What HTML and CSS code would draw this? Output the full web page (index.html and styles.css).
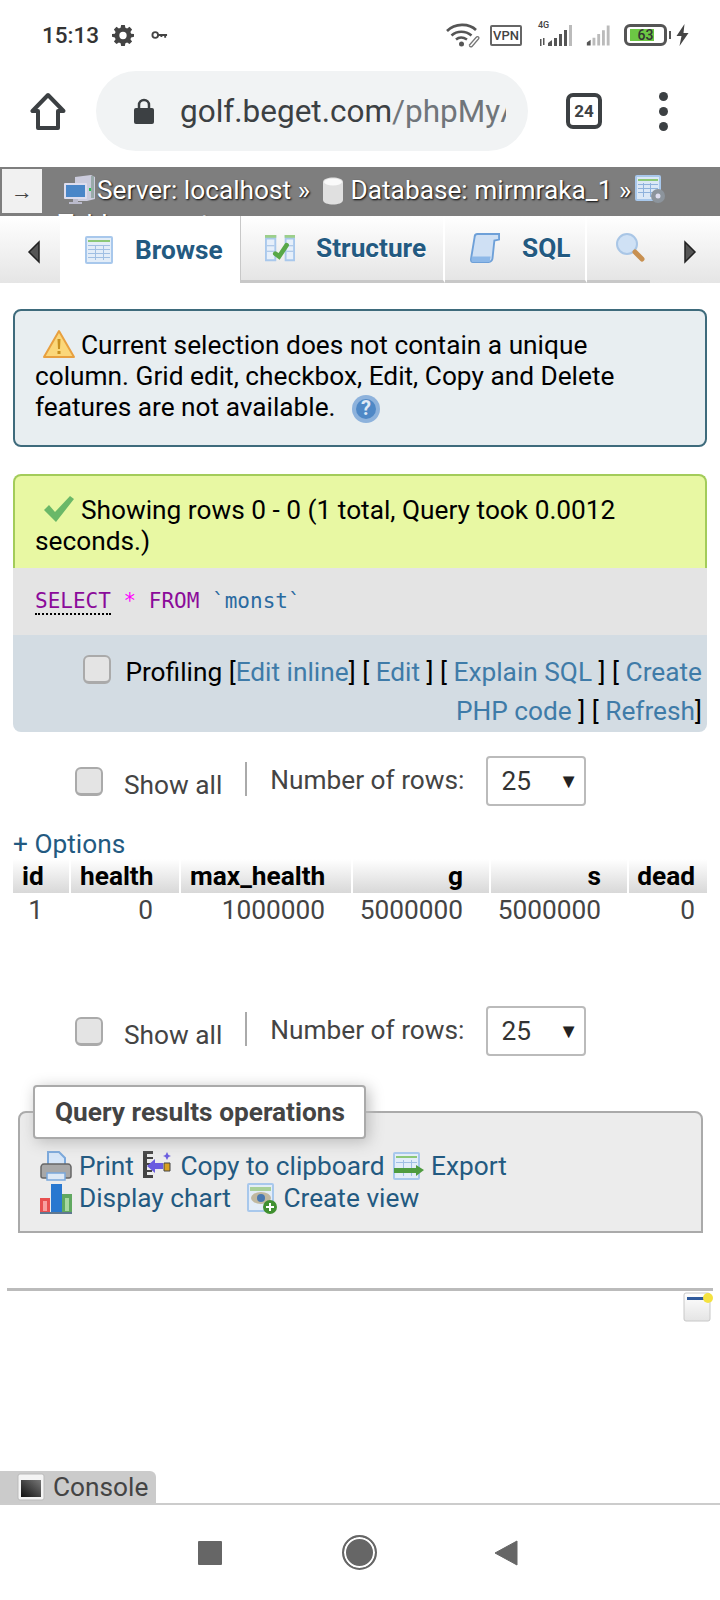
FILE: index.html
```html
<!DOCTYPE html>
<html lang="en">
<head>
<meta charset="utf-8">
<title>phpMyAdmin</title>
<link rel="stylesheet" href="styles.css">
</head>
<body>
<div class="phone">
  <header class="status">
    <span class="time">15:13</span>
    <svg class="ic-gear" viewBox="0 0 24 24"><path fill="#444" fill-rule="evenodd" d="M10 1h4l.6 3.1 1.9.8L19.100 3.100 21.900 6l-1.800 2.600.8 1.900L24 11v3l-3.100.6-.8 1.900 1.800 2.600-2.800 2.800-2.600-1.800-1.900.8L14 24h-4l-.6-3.100-1.900-.8-2.600 1.800L2.100 19.100l1.800-2.600-.8-1.900L0 14v-3l3.100-.5.8-1.900L2.100 6l2.800-2.900 2.600 1.800 1.900-.8zM12 8.500a4 4 0 1 0 0 8 4 4 0 0 0 0-8z"/></svg>
    <svg class="ic-key" viewBox="0 0 18 10"><circle cx="4.500" cy="5" r="3" fill="none" stroke="#444" stroke-width="2"/><path fill="#444" d="M7.500 4H17v2h-1v2h-2V6h-2v1h-2V6H7.500z"/></svg>
    <span class="grow"></span>
    <svg class="ic-wifi" viewBox="0 0 34 24"><g fill="none" stroke="#555" stroke-width="2.600"><path d="M1 7.500C9-.5 23-.5 30 6.500"/><path d="M5.500 12c5.500-5 14-5 20 0"/><path d="M10 16c3-2.500 7-2.500 11 0"/></g><circle cx="15.500" cy="20.500" r="2.500" fill="#555"/><path d="M23 22l7-8c2-2 4 0 2 2l-6 7c-1 1-3 0-2-1" fill="none" stroke="#777" stroke-width="1.300"/></svg>
    <span class="vpn">VPN</span>
    <span class="net"><span class="net-label">4G</span>
      <svg class="ic-sig" viewBox="0 0 38 24"><path fill="#555" d="M2 16h1.500v7H2zM5 15h1.500v7H5zM10 20l4-3v6h-4zM16 15h3v8h-3zM21 11h3v12h-3zM26 7h3v16h-3z"/><path fill="#bbb" d="M31 2h3v21h-3z"/></svg>
    </span>
    <svg class="ic-sig2" viewBox="0 0 38 24"><path fill="#555" d="M3 20l4-3v6H3z"/><path fill="#bbb" d="M9 15h3v8H9zM14 11h3v12h-3zM19 7h3v16h-3zM24 2h3v21h-3z"/></svg>
    <span class="battery"><span class="battery-fill"></span><span class="battery-num">63</span></span>
    <span class="battery-tip"></span>
    <svg class="ic-bolt" viewBox="0 0 12 22"><path fill="#444" d="M8 0L0 12h5l-2 10 9-13H7z"/></svg>
  </header>

  <nav class="browser">
    <svg class="ic-home" viewBox="0 0 36 38"><path fill="none" stroke="#3c4043" stroke-width="4" stroke-linejoin="round" d="M18 3L2.500 19H8v17h20V19h5.500z"/></svg>
    <div class="url">
      <svg class="ic-lock" viewBox="0 0 20 26"><path fill="#3c4043" d="M2 10h16a2 2 0 0 1 2 2v12a2 2 0 0 1-2 2H2a2 2 0 0 1-2-2V12a2 2 0 0 1 2-2z"/><path fill="none" stroke="#3c4043" stroke-width="2.500" d="M5 11V7a5 5 0 0 1 10 0v4"/></svg>
      <span class="url-text"><span class="url-host">golf.beget.com</span>/phpMyAdmin</span>
    </div>
    <span class="tabcount">24</span>
    <span class="menu"><i></i><i></i><i></i></span>
  </nav>

  <div class="crumb">
    <span class="crumb-toggle">→</span>
    <div class="crumb-text">
      <svg class="ic-server" viewBox="0 0 32 30"><path fill="#ccd" d="M12 2l16-2 4 2v22l-8 2H12z"/><path fill="#9aa" d="M28 1h3v22h-3z"/><path fill="#28c050" d="M26 13h2v3h-2z"/><rect x="1" y="8" width="23" height="16" rx="1" fill="#dde"/><rect x="3" y="10" width="19" height="12" fill="#4a86c8"/><path fill="#bbc" d="M10 24h5v3h4v2H6v-2h4z"/></svg><span class="crumb-word">Server: localhost »</span>
      <svg class="ic-db" viewBox="0 0 22 28"><path fill="#e0e0e0" d="M1 5c0-6 20-6 20 0v18c0 6-20 6-20 0z"/><ellipse cx="11" cy="5" rx="9" ry="3.500" fill="#fafafa"/></svg><span class="crumb-word">Database: mirmraka_1 »</span>
      <svg class="ic-tblcog" viewBox="0 0 32 30"><rect width="26" height="26" x="0" y="0" rx="2" fill="#a8c8ec"/><rect x="2" y="2" width="22" height="22" fill="#dbe8f6"/><path fill="#8cc878" d="M3 4h20v2H3z"/><path fill="#8fb2dc" d="M3 9h20v1H3zM3 13h20v1H3zM3 17h20v1H3zM8 8h1v14H8zM15 8h1v14h-1z"/><circle cx="23" cy="21" r="7" fill="#8c949c"/><circle cx="23" cy="21" r="2.500" fill="#dde"/></svg>
      <span class="crumb-word">Table: monst</span>
    </div>
  </div>

  <div class="tabs">
    <span class="tab-arrow tab-left"><svg viewBox="0 0 14 24"><path fill="#555" stroke="#222" stroke-width="1.500" d="M12 2L2 12l10 10z"/></svg></span>
    <a class="tab tab-browse">
      <svg class="tab-ic" viewBox="0 0 30 30"><rect x="1" y="1" width="28" height="28" rx="2" fill="#a8c8ec"/><rect x="3" y="3" width="24" height="24" fill="#e3edf8"/><path fill="#8cc878" d="M4 5h22v2H4z"/><path fill="#a0bfe3" d="M4 10h22v1H4zM4 14h22v1H4zM4 18h22v1H4zM4 22h22v1H4zM11 10h1v15h-1zM19 10h1v15h-1z"/></svg>
      <span>Browse</span>
    </a>
    <a class="tab tab-structure">
      <svg class="tab-ic" viewBox="0 0 32 30"><path fill="#a9c8ec" d="M0 1h12v28H0zM21 1h11v28H21z"/><path fill="#e6effa" d="M2 6h8v21H2zM23 6h7v21h-7z"/><path fill="#9ccf8a" d="M0 1h12v3H0zM21 1h11v3H21z"/><path fill="#a0bfe3" d="M2 12h8v1H2zM2 18h8v1H2zM23 12h7v1h-7zM23 18h7v1h-7z"/><path fill="none" stroke="#58a848" stroke-width="5" stroke-linecap="round" d="M11 21l4 3 8-12"/></svg>
      <span>Structure</span>
    </a>
    <a class="tab tab-sql">
      <svg class="tab-ic" viewBox="0 0 32 32"><path fill="#cfe0f4" stroke="#6ea0d8" stroke-width="2" d="M8 1h23v6l-5 1-2 19c0 2-2 4-4 4H3c-2 0-2-2-2-3l4-24c0-2 1-3 3-3z"/><path fill="#8db8e8" d="M2 25h20l-1 6H3c-1 0-2-1-1-6z"/></svg>
      <span>SQL</span>
    </a>
    <a class="tab tab-search">
      <svg class="tab-ic" viewBox="0 0 30 30"><circle cx="12" cy="11" r="10" fill="#cfe1f5" stroke="#a9c6e6" stroke-width="2"/><path stroke="#c89050" stroke-width="5" stroke-linecap="round" d="M20 19l7 7"/></svg>
    </a>
    <span class="tab-arrow tab-right"><svg viewBox="0 0 14 24"><path fill="#555" stroke="#222" stroke-width="1.500" d="M2 2l10 10L2 22z"/></svg></span>
  </div>

  <main class="page">
    <section class="notice">
      <svg class="msg-ic" viewBox="0 0 34 30"><path fill="#fbd77a" stroke="#e8a040" stroke-width="2" stroke-linejoin="round" d="M17 2l15 26H2z"/><path fill="#c89020" d="M15.500 10h3l-.5 10h-2zM15.500 22h3v3h-3z"/></svg>Current selection does not contain a unique column. Grid edit, checkbox, Edit, Copy and Delete features are not available.
      <svg class="help-ic" viewBox="0 0 30 30"><circle cx="15" cy="15" r="14" fill="#8db2dc"/><circle cx="15" cy="15" r="10" fill="#4f88c6"/><text class="help-q" x="15" y="21" text-anchor="middle">?</text></svg>
    </section>

    <section class="result">
      <div class="success">
        <svg class="msg-ic" viewBox="0 0 34 30"><path fill="#6ab868" d="M2 16l5-5 6 7L28 2l4 3-18 23z"/></svg>Showing rows 0 - 0 (1 total, Query took 0.0012 seconds.)
      </div>
      <div class="sql"><span class="kw kw-select">SELECT</span> <span class="star">*</span> <span class="kw">FROM</span> <span class="ident">`monst`</span></div>
      <div class="tools">
        <span class="check check-tools"></span><span class="tools-label">Profiling</span> [<a>Edit inline</a>] [ <a>Edit</a> ] [ <a>Explain SQL</a> ] [ <a>Create PHP code</a> ] [ <a>Refresh</a>]
      </div>
    </section>

    <div class="pager">
      <span class="check"></span>
      <span class="showall">Show all</span>
      <span class="sep"></span>
      <span class="rows-label">Number of rows:</span>
      <span class="select">25<span class="caret">▼</span></span>
    </div>

    <a class="options">+ Options</a>

    <table class="data">
      <thead>
        <tr><th class="c-id l">id</th><th class="c-h l">health</th><th class="c-m l">max_health</th><th class="c-g">g</th><th class="c-s">s</th><th class="c-d">dead</th></tr>
      </thead>
      <tbody>
        <tr><td>1</td><td>0</td><td>1000000</td><td>5000000</td><td>5000000</td><td>0</td></tr>
      </tbody>
    </table>

    <div class="pager pager-2">
      <span class="check"></span>
      <span class="showall">Show all</span>
      <span class="sep"></span>
      <span class="rows-label">Number of rows:</span>
      <span class="select">25<span class="caret">▼</span></span>
    </div>

    <section class="ops">
      <div class="ops-legend">Query results operations</div>
      <div class="ops-line">
        <svg class="op-ic" viewBox="0 0 32 32"><path fill="#d6e6f8" stroke="#7aa8dc" stroke-width="2" d="M8 2h11l6 6v9H8z"/><path fill="#a8a8a8" stroke="#666" stroke-width="1.500" d="M4 14h24c2 0 3 2 3 3v9c0 1-1 2-2 2H3c-1 0-2-1-2-2v-9c0-1 1-3 3-3z"/><path fill="#dde9f6" stroke="#7aa8dc" stroke-width="1.500" d="M7 23h18v7H7z"/></svg><a>Print</a>
        <svg class="op-ic op-copy" viewBox="0 0 32 32"><path fill="#444" d="M2 1h10v3H6v3h6v2H6v4h5v2H6v5h5v2H6v3h6v3H2z"/><path fill="#6a5ce0" d="M6 16l8-7v4h8v6h-8v4z"/><path fill="#d8a020" stroke="#444" d="M23 13h6v8h-6z"/><path fill="#6a5ce0" d="M26 2l1.500 3 2.500 1-2.500 1L26 10l-1.500-3L22 6l2.500-1z"/></svg><a>Copy to clipboard</a>
        <svg class="op-ic" viewBox="0 0 32 32"><rect x="1" y="2" width="27" height="28" rx="2" fill="#a8c8ec"/><rect x="3" y="4" width="23" height="24" fill="#e3edf8"/><path fill="#8cc878" d="M4 6h21v2H4z"/><path fill="#a0bfe3" d="M4 12h21v1H4zM11 10h1v16h-1zM19 10h1v16h-1z"/><path fill="#4f9c40" d="M2 18h22v-3l8 5-8 6v-3H2z"/></svg><a>Export</a>
      </div>
      <div class="ops-line">
        <svg class="op-ic" viewBox="0 0 32 32"><path fill="#e85050" d="M0 16h10v15H0z"/><path fill="#f8a0a0" d="M3 19h4v10H3z"/><path fill="#2878d0" d="M11 2h11v29H11z"/><path fill="#60a860" d="M22 12h10v19H22z"/><path fill="#a8d8a0" d="M25 16h4v13h-4z"/><path fill="#607890" d="M0 30h32v2H0z"/></svg><a>Display chart</a>
        <svg class="op-ic op-view" viewBox="0 0 32 32"><rect x="1" y="1" width="27" height="29" rx="2" fill="#a8c8ec"/><rect x="3" y="3" width="23" height="25" fill="#e3edf8"/><path fill="#a8d098" d="M4 5h21v4H4z"/><ellipse cx="15" cy="16" rx="10" ry="6" fill="#c0b8a0"/><circle cx="15" cy="16" r="4" fill="#4878b0"/><circle cx="24" cy="25" r="7" fill="#409030"/><path fill="#fff" d="M23 21h2v3h3v2h-3v3h-2v-3h-3v-2h3z"/></svg><a>Create view</a>
      </div>
    </section>

    <hr class="rule">
    <div class="note-row">
      <svg class="ic-note" viewBox="0 0 30 30"><defs><linearGradient id="ng" x1="0" y1="0" x2="0" y2="1"><stop offset="0" stop-color="#fff"/><stop offset="1" stop-color="#e4e4e4"/></linearGradient></defs><rect x="1" y="1" width="26" height="28" rx="2" fill="url(#ng)" stroke="#c8c8c8"/><path fill="#2f5a9c" d="M4 5h19v3H4z"/><circle cx="25" cy="6" r="5" fill="#f4e240"/></svg>
    </div>
  </main>

  <div class="console-bar">
    <span class="console-tab">
      <svg class="ic-console" viewBox="0 0 28 28"><rect x="1" y="1" width="26" height="26" rx="2" fill="#f4f4f4" stroke="#bbb"/><defs><linearGradient id="cg" x1="0" y1="1" x2="1" y2="0"><stop offset="0" stop-color="#111"/><stop offset="1" stop-color="#777"/></linearGradient></defs><rect x="4" y="7" width="20" height="17" fill="url(#cg)"/></svg>
      Console
    </span>
  </div>

  <footer class="androidnav">
    <span class="nav-square"></span>
    <span class="nav-circle"></span>
    <svg class="nav-back" viewBox="0 0 24 26"><path fill="#666" stroke="#666" stroke-width="1" stroke-linejoin="round" d="M23 1v24L1 13z"/></svg>
  </footer>
</div>
</body>
</html>
```

FILE: styles.css
```css
* { box-sizing: border-box; }
html, body { margin: 0; padding: 0; background: #fff; }
body { font-family: Roboto, "Liberation Sans", sans-serif; }
a { color: #235a81; text-decoration: none; }
svg { display: inline-block; flex: none; }

.phone { width: 720px; height: 1600px; display: flex; flex-direction: column; overflow: hidden; }

/* Status bar */
.status { height: 71px; padding: 0 0 1px 42px; display: flex; align-items: center; flex: none; }
.time { font-size: 22.500px; font-weight: 500; color: #333; width: 70px; }
.ic-gear { width: 22px; height: 22px; }
.ic-key { width: 17px; height: 10px; margin-left: 17px; }
.grow { flex: 1; }
.ic-wifi { width: 34px; height: 25px; }
.vpn { width: 32px; height: 21px; margin-left: 10px; border: 2px solid #666; border-radius: 2px; font-size: 13px; font-weight: 500; line-height: 17px; text-align: center; color: #444; }
.net { position: relative; margin-left: 13px; width: 44px; height: 24px; }
.net-label { position: absolute; left: 3px; top: -3px; font-size: 9px; font-weight: 500; color: #444; line-height: 10px; }
.ic-sig { width: 44px; height: 24px; display: block; }
.ic-sig2 { width: 36px; height: 24px; margin-left: 5px; }
.battery { position: relative; width: 43px; height: 22px; margin-left: 4px; border: 3px solid #555; border-radius: 6px; display: block; }
.battery-fill { position: absolute; left: 3px; top: 2px; bottom: 2px; width: 24px; background: #6cc644; }
.battery-num { position: absolute; inset: 0; font-size: 14px; font-weight: 500; line-height: 16px; text-align: center; color: #333; }
.battery-tip { width: 2px; height: 8px; margin-left: 2px; background: #555; }
.ic-bolt { width: 13px; height: 22px; margin: 0 31px 0 5px; }

/* Browser bar */
.browser { height: 80px; padding-left: 30px; display: flex; align-items: center; flex: none; }
.ic-home { width: 36px; height: 38px; }
.url { width: 432px; height: 80px; margin-left: 30px; padding-left: 38px; display: flex; align-items: center; background: #f1f3f4; border-radius: 40px; overflow: hidden; }
.ic-lock { width: 20px; height: 26px; }
.url-text { margin-left: 26px; width: 326px; overflow: hidden; white-space: nowrap; font-size: 31.500px; color: #70757a; }
.url-host { color: #3c4043; }
.tabcount { width: 36px; height: 36px; margin-left: 38px; border: 4px solid #3c4043; border-radius: 7px; font-size: 17px; font-weight: 700; line-height: 28px; text-align: center; color: #3c4043; }
.menu { margin-left: 57px; display: flex; flex-direction: column; gap: 6px; }
.menu i { width: 9px; height: 9px; border-radius: 50%; background: #3c4043; }

/* Breadcrumb */
.crumb { height: 49px; margin-top: 16px; background: #7e7e7e; display: flex; flex: none; overflow: hidden; position: relative; }
.crumb-toggle { width: 40px; height: 44px; margin: 2px 0 0 2px; background: #f1f1f1; color: #444; font-size: 22px; line-height: 46px; text-align: center; flex: none; }
.crumb-text { margin-left: 16px; width: 655px; font-size: 26.250px; line-height: 34px; color: #fff; text-shadow: 1px 1px 2px #000; padding-top: 6px; }
.crumb-word { vertical-align: top; }
.ic-server { width: 32px; height: 30px; vertical-align: top; margin: 2px 2px 0 5px; }
.ic-db { width: 22px; height: 28px; vertical-align: top; margin: 4px 7px 0 5px; }
.ic-tblcog { width: 32px; height: 30px; vertical-align: top; margin: 2px 0 0 -3px; }

/* Tabs */
.tabs { height: 67px; display: flex; flex: none; position: relative; background: #fff; }
.tab { display: flex; align-items: center; height: 67px; font-size: 26.250px; font-weight: 700; background: linear-gradient(#fff, #e5e5e5); border-bottom: 3px solid #c8c8c8; border-right: 2px solid #fff; text-shadow: 0 1px 1px #fff; color: #235a81; flex: none; }
.tab-arrow { width: 60px; height: 67px; background: linear-gradient(#fff, #e5e5e5); display: flex; align-items: center; flex: none; }
.tab-arrow svg { width: 14px; height: 24px; }
.tab-left { justify-content: flex-start; padding-left: 27px; }
.tab-left svg { margin-top: 4px; }
.tab-right { position: absolute; left: 650px; top: 0; width: 70px; padding-left: 33px; }
.tab-right svg { margin-top: 4px; }
.tab-browse { width: 181px; padding-left: 24px; background: #fff; border-bottom: 0; border-right: 1px solid #c8c8c8; }
.tab-structure { width: 204px; padding-left: 24px; }
.tab-sql { width: 142px; padding-left: 24px; }
.tab-search { width: 100px; padding-left: 28px; }
.tab-ic { width: 30px; height: 30px; margin-right: 21px; }
.tab-sql .tab-ic { width: 32px; }

/* Page */
.page { flex: 1; display: flex; flex-direction: column; padding: 0 13px; font-size: 26.250px; line-height: 30.800px; color: #000; min-height: 0; }

.notice { height: 138px; margin-top: 26px; padding: 18px 20px 0; background: #e8eef1; border: 2px solid #3e6b7c; border-radius: 8px; }
.msg-ic { width: 34px; height: 30px; margin: 0 5px 0 7px; vertical-align: -5px; }
.help-ic { width: 30px; height: 30px; margin-left: 9px; vertical-align: -8px; }
.help-q { font: 700 20px Roboto, sans-serif; fill: #dfe9f5; }

.result { margin-top: 27px; }
.success { height: 94px; padding: 18px 20px 0; background: #e8f8a3; border: 2px solid #a3cc5a; border-bottom: 0; border-radius: 8px 8px 0 0; }
.sql { height: 67px; padding: 18px 22px 0; background: #e4e4e4; font-family: "DejaVu Sans Mono", monospace; font-size: 21px; line-height: 30px; color: #235a81; }
.kw { color: #8b0a9a; }
.kw-select { border-bottom: 2px dotted #000; }
.star { color: #ff00ff; }
.ident { color: #2a6aa0; }
.tools { height: 97px; padding: 18px 5px 0 40px; background: #d3dce3; border-radius: 0 0 8px 8px; text-align: right; line-height: 39px; }
.tools a { color: #3f7ba8; }
.check { display: inline-block; width: 28px; height: 29px; background: #e4e4e4; border: 2px solid #aaa; border-bottom-width: 3px; border-radius: 6px; flex: none; }
.check-tools { vertical-align: -3px; }
.tools-label { margin-left: 14px; }

.pager { height: 50px; margin-top: 24px; padding-left: 62px; display: flex; color: #444; position: relative; flex: none; }
.pager .check { margin-top: 11px; }
.showall { margin: 14px 0 0 21px; line-height: 30px; }
.sep { width: 2px; height: 34px; margin: 6px 0 0 23px; background: #aaa; }
.rows-label { margin: 9px 0 0 23px; line-height: 30px; }
.select { width: 100px; height: 50px; margin-left: 22px; padding-left: 13px; border: 2px solid #bbb; border-radius: 4px; line-height: 46px; display: flex; justify-content: space-between; color: #333; background: #fff; }
.caret { font-size: 20px; margin-right: 6px; color: #222; }

.options { margin-top: 23px; height: 30px; line-height: 30px; }
.data { width: 694px; border-collapse: separate; border-spacing: 0; table-layout: fixed; flex: none; }
.data th { height: 34px; padding: 0 26px 0 9px; background: linear-gradient(#fff, #d8d8d8); font-weight: 700; font-size: 26.250px; line-height: 30px; text-align: right; border-right: 2px solid #fff; color: #000; }
.data th.l { text-align: left; padding-right: 0; }
.data th:last-child { border-right: 0; padding-right: 12px; padding-left: 0; }
.data td { padding: 0 28px 0 0; text-align: right; color: #444; height: 34px; line-height: 32px; }
.data td:last-child { padding-right: 12px; }
.c-id { width: 58px; } .c-h { width: 110px; } .c-m { width: 172px; } .c-g { width: 138px; } .c-s { width: 138px; } .c-d { width: 78px; }

.pager-2 { margin-top: 79px; }

.ops { position: relative; height: 122px; margin: 55px 4px 0 5px; padding: 37px 0 0 19px; background: #ececec; border: 2px solid #aaa; border-radius: 8px 8px 0 0; flex: none; line-height: 32px; }
.ops-legend { position: absolute; left: 13px; top: -28px; width: 333px; height: 54px; background: #fff; border: 2px solid #aaa; border-radius: 4px; font-weight: 700; color: #444; line-height: 50px; padding-left: 20px; box-shadow: 3px 3px 15px #bbb; }
.ops-line { white-space: nowrap; height: 32px; }
.op-ic { width: 34px; height: 32px; vertical-align: -7px; margin: 0 6px 0 0; }
.op-copy { margin-left: 0; }
.op-view { margin: 0 4px 0 8px; }

.rule { height: 3px; margin: 55px -6px 0; border: 0; background: #bbb; flex: none; }
.note-row { display: flex; justify-content: flex-end; margin: 1px -6px 0 0; }
.ic-note { width: 30px; height: 30px; }

/* Console */
.console-bar { height: 34px; border-bottom: 2px solid #ccc; flex: none; }
.console-tab { display: flex; align-items: center; width: 156px; height: 32px; padding-left: 17px; background: #cbcbcb; border-radius: 0 6px 0 0; font-size: 26.250px; color: #444; gap: 8px; }
.ic-console { width: 28px; height: 28px; }

/* Android nav */
.androidnav { height: 95px; flex: none; display: flex; align-items: center; padding-left: 198px; }
.nav-square { width: 24px; height: 24px; background: #666; border-radius: 1px; }
.nav-circle { width: 35px; height: 35px; margin-left: 120px; border: 2px solid #666; border-radius: 50%; background: #666; box-shadow: inset 0 0 0 2px #fff; }
.nav-back { width: 24px; height: 26px; margin-left: 117px; }
```
